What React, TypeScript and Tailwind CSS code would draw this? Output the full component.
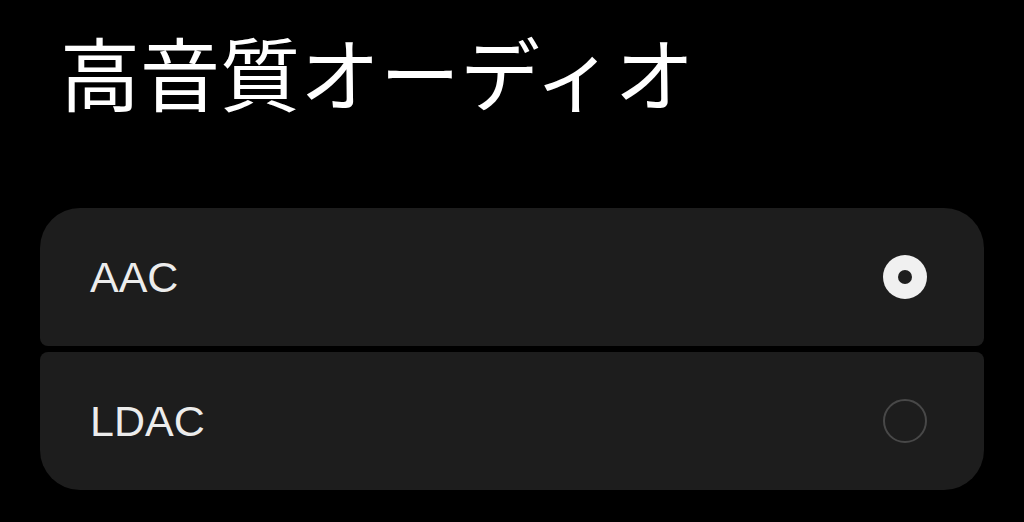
import { useState } from 'react';

type Codec = { id: string; label: string };

const codecs: Codec[] = [
  { id: 'aac', label: 'AAC' },
  { id: 'ldac', label: 'LDAC' },
];

function Radio({ checked }: { checked: boolean }) {
  if (checked) {
    return (
      <span className="flex h-[44px] w-[44px] items-center justify-center rounded-full bg-[#f0f0f0]">
        <span className="h-[14px] w-[14px] rounded-full bg-[#1e1e1e]" />
      </span>
    );
  }
  return <span className="h-[44px] w-[44px] rounded-full border-2 border-[#484848]" />;
}

export default function App() {
  const [selected, setSelected] = useState('aac');

  return (
    <div className="h-[522px] w-[1024px] overflow-hidden bg-black px-10 font-['Liberation_Sans',sans-serif]">
      <h1 className="pl-[20px] pt-[22px] font-['Noto_Sans_CJK_JP',sans-serif] text-[80px] leading-[96px] text-white">
        高音質オーディオ
      </h1>
      <div className="mt-[90px] flex flex-col gap-[6px]">
        {codecs.map((c, i) => (
          <button
            key={c.id}
            onClick={() => setSelected(c.id)}
            className={`flex h-[138px] items-center justify-between bg-[#1d1d1d] pl-[50px] pr-[57px] text-left ${
              i === 0 ? 'rounded-t-[40px] rounded-b-[8px]' : 'rounded-t-[8px] rounded-b-[40px]'
            }`}
          >
            <span className="text-[43px] text-[#ececec]">{c.label}</span>
            <Radio checked={selected === c.id} />
          </button>
        ))}
      </div>
    </div>
  );
}
